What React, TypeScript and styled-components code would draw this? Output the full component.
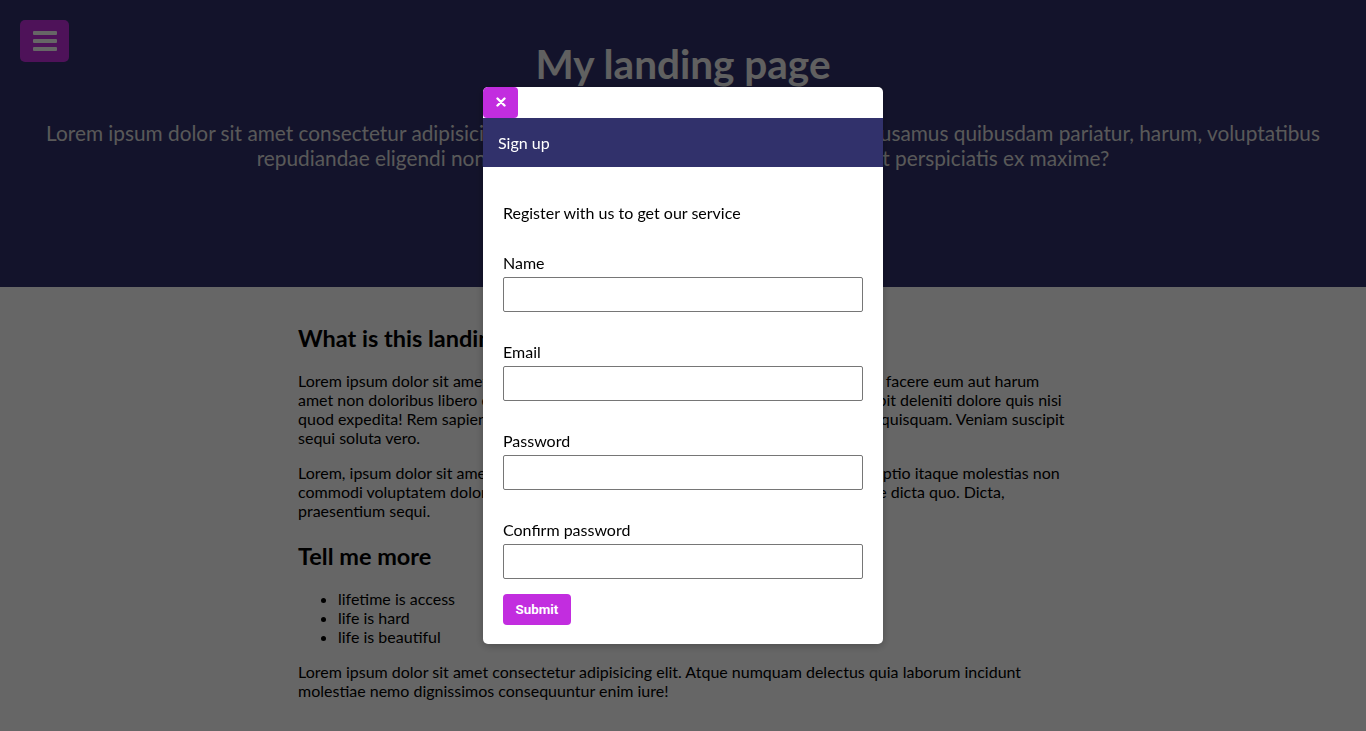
import React from "react";
import styled, { createGlobalStyle } from "styled-components";

const GlobalStyle = createGlobalStyle`
  * { box-sizing: border-box; }
  html, body { margin: 0; padding: 0; }
  body {
    font-family: Lato, "Noto Sans", sans-serif;
    background: #ffffff;
    color: #000;
  }
`;

const Page = styled.div`
  min-height: 731px;
  position: relative;
`;

const Hero = styled.header`
  background: #31316b;
  height: 287px;
  padding-top: 40px;
  text-align: center;
`;

const MenuButton = styled.button`
  position: absolute;
  top: 20px;
  left: 20px;
  width: 49px;
  height: 42px;
  border: none;
  border-radius: 5px;
  background: #c22ddf;
  display: flex;
  flex-direction: column;
  align-items: center;
  justify-content: center;
  gap: 4px;
  padding: 0;
  cursor: pointer;
`;

const Bar = styled.span`
  display: block;
  width: 24px;
  height: 4px;
  border-radius: 1px;
  background: #ffffff;
`;

const Title = styled.h1`
  margin: 0;
  font-size: 40.5px;
  font-weight: 700;
  line-height: 1.2;
  color: #f0f0f0;
`;

const Lead = styled.p`
  margin: 31px 0 0;
  padding: 0 40px;
  font-size: 20.8px;
  line-height: 25px;
  color: #dedede;
`;

const Main = styled.main`
  width: 770px;
  margin: 0 auto;
  padding-top: 15.5px;
  padding-bottom: 20px;
`;

const Heading = styled.h2`
  font-size: 23.5px;
  font-weight: 700;
  line-height: 28px;
  margin: 21.5px 0 19px;
`;

const Text = styled.p`
  font-size: 16px;
  line-height: 19px;
  margin: 16px 0;
`;

const List = styled.ul`
  font-size: 16px;
  line-height: 19px;
  margin: 16px 0;
  padding-left: 40px;
`;

const Overlay = styled.div`
  position: fixed;
  inset: 0;
  background: rgba(0, 0, 0, 0.6);
  display: flex;
  align-items: center;
  justify-content: center;
`;

const Modal = styled.div`
  width: 400px;
  background: #ffffff;
  border-radius: 5px;
  overflow: hidden;
  box-shadow: 0 2px 8px rgba(0, 0, 0, 0.25);
`;

const CloseRow = styled.div`
  height: 31px;
  display: flex;
`;

const CloseButton = styled.button`
  width: 35px;
  height: 31px;
  border: none;
  border-radius: 4px;
  background: #c22ddf;
  display: flex;
  align-items: center;
  justify-content: center;
  padding: 0;
  cursor: pointer;
`;

const ModalHeader = styled.div`
  height: 49px;
  background: #31316b;
  color: #ffffff;
  font-size: 16px;
  display: flex;
  align-items: center;
  padding: 0 15px;
`;

const ModalBody = styled.div`
  padding: 20px 20px 19px;
`;

const Intro = styled.p`
  margin: 16px 0 31px;
  font-size: 16px;
  line-height: 1.2;
`;

const Form = styled.form`
  display: flex;
  flex-direction: column;
  gap: 30px;
`;

const Field = styled.div`
  display: flex;
  flex-direction: column;
  gap: 5px;
`;

const Label = styled.label`
  font-size: 16px;
  line-height: 1.2;
`;

const Input = styled.input`
  width: 360px;
  height: 35px;
  border: 1px solid #767676;
  border-radius: 2px;
  padding: 0 6px;
  font-family: Lato, sans-serif;
  font-size: 16px;
`;

const Submit = styled.button`
  align-self: flex-start;
  margin-top: -15px;
  height: 31px;
  padding: 0 12.5px;
  border: none;
  border-radius: 4px;
  background: #c22ddf;
  color: #ffffff;
  font-family: Roboto, "Liberation Sans", Arial, sans-serif;
  font-weight: 700;
  font-size: 13.333px;
  cursor: pointer;
`;

const fields = ["Name", "Email", "Password", "Confirm password"];

export default function App() {
  return (
    <Page>
      <GlobalStyle />
      <Hero>
        <MenuButton aria-label="menu">
          <Bar />
          <Bar />
          <Bar />
        </MenuButton>
        <Title>My landing page</Title>
        <Lead>
          Lorem ipsum dolor sit amet consectetur adipisicing elit. Nobis dolores nemo, laudantium
          accusamus quibusdam pariatur, harum, voluptatibus repudiandae eligendi non magnam quo,
          dolores voluptas velit sit amet perspiciatis ex maxime?
        </Lead>
      </Hero>
      <Main>
        <Heading>What is this landing page?</Heading>
        <Text>
          Lorem ipsum dolor sit amet consectetur adipisicing elit. Quos, nesciunt ad voluptate facere
          eum aut harum amet non doloribus libero eaque, ratione qui officiis dolorem quod accusamus
          suscipit deleniti dolore quis nisi quod expedita! Rem sapiente, magni quae doloremque eveniet
          accusamus nesciunt quisquam. Veniam suscipit sequi soluta vero.
        </Text>
        <Text>
          Lorem, ipsum dolor sit amet consectetur adipisicing elit. Minima, eos officiis omnis optio
          itaque molestias non commodi voluptatem dolores nihil eius corporis quidem, eligendi ipsa
          illum voluptate dicta quo. Dicta, praesentium sequi.
        </Text>
        <Heading>Tell me more</Heading>
        <List>
          <li>lifetime is access</li>
          <li>life is hard</li>
          <li>life is beautiful</li>
        </List>
        <Text>
          Lorem ipsum dolor sit amet consectetur adipisicing elit. Atque numquam delectus quia
          laborum incidunt molestiae nemo dignissimos consequuntur enim iure!
        </Text>
      </Main>
      <Overlay>
        <Modal>
          <CloseRow>
            <CloseButton aria-label="close">
              <svg width="10" height="10" viewBox="0 0 10 10">
                <path d="M1.5 1.5 L8.5 8.5 M8.5 1.5 L1.5 8.5" stroke="#fff" strokeWidth="2.4" strokeLinecap="round" />
              </svg>
            </CloseButton>
          </CloseRow>
          <ModalHeader>Sign up</ModalHeader>
          <ModalBody>
            <Intro>Register with us to get our service</Intro>
            <Form onSubmit={(e) => e.preventDefault()}>
              {fields.map((f) => (
                <Field key={f}>
                  <Label>{f}</Label>
                  <Input type={f.toLowerCase().includes("password") ? "password" : f === "Email" ? "email" : "text"} />
                </Field>
              ))}
              <Submit type="submit">Submit</Submit>
            </Form>
          </ModalBody>
        </Modal>
      </Overlay>
    </Page>
  );
}
